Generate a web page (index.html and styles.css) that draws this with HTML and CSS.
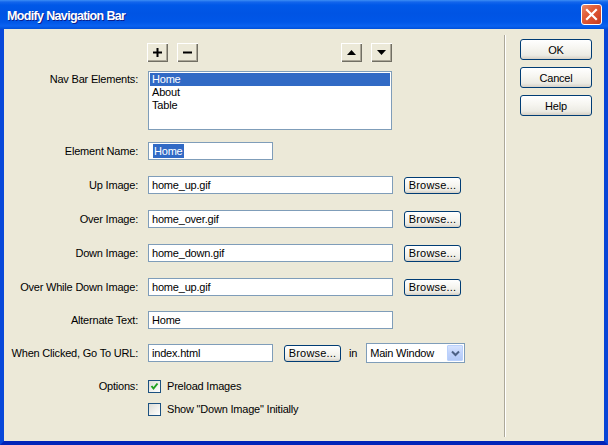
FILE: index.html
```html
<!DOCTYPE html>
<html>
<head>
<meta charset="utf-8">
<title>Modify Navigation Bar</title>
<link rel="stylesheet" href="styles.css">
</head>
<body>
<div class="window">
  <div class="titlebar">
    <span class="title">Modify Navigation Bar</span>
    <span class="close">
      <svg width="13" height="13" viewBox="0 0 13 13"><path d="M2 2 L11 11 M11 2 L2 11" stroke="#fff" stroke-width="2.2" stroke-linecap="square"/></svg>
    </span>
  </div>
  <div class="frame">
    <div class="client">
      <div class="form">
        <div class="row row-tools">
          <span class="label"></span>
          <div class="tools">
            <div class="tool-group">
              <span class="tbtn"><svg width="9" height="9" viewBox="0 0 9 9"><path d="M3.5 0h2v3.5h3.5v2h-3.5v3.5h-2v-3.5h-3.5v-2h3.5z" fill="#000"/></svg></span>
              <span class="tbtn"><svg width="9" height="9" viewBox="0 0 9 9"><rect x="0" y="3.5" width="9" height="2" fill="#000"/></svg></span>
            </div>
            <div class="tool-group">
              <span class="tbtn"><svg width="9" height="5" viewBox="0 0 9 5"><path d="M4.5 0 L9 5 L0 5 Z" fill="#000"/></svg></span>
              <span class="tbtn"><svg width="9" height="5" viewBox="0 0 9 5"><path d="M0 0 L9 0 L4.5 5 Z" fill="#000"/></svg></span>
            </div>
          </div>
        </div>

        <div class="row row-list">
          <span class="label label-top">Nav Bar Elements:</span>
          <div class="listbox">
            <div class="item selected">Home</div>
            <div class="item">About</div>
            <div class="item">Table</div>
          </div>
        </div>

        <div class="row row-first">
          <span class="label">Element Name:</span>
          <div class="field">
            <div class="textbox short"><span class="sel">Home</span></div>
          </div>
        </div>

        <div class="row row-field">
          <span class="label">Up Image:</span>
          <div class="field">
            <div class="textbox long">home_up.gif</div>
            <span class="xpbtn browse">Browse...</span>
          </div>
        </div>

        <div class="row row-field">
          <span class="label">Over Image:</span>
          <div class="field">
            <div class="textbox long">home_over.gif</div>
            <span class="xpbtn browse">Browse...</span>
          </div>
        </div>

        <div class="row row-field">
          <span class="label">Down Image:</span>
          <div class="field">
            <div class="textbox long">home_down.gif</div>
            <span class="xpbtn browse">Browse...</span>
          </div>
        </div>

        <div class="row row-field">
          <span class="label">Over While Down Image:</span>
          <div class="field">
            <div class="textbox long">home_up.gif</div>
            <span class="xpbtn browse">Browse...</span>
          </div>
        </div>

        <div class="row row-alt">
          <span class="label">Alternate Text:</span>
          <div class="field">
            <div class="textbox long">Home</div>
          </div>
        </div>

        <div class="row row-url">
          <span class="label">When Clicked, Go To URL:</span>
          <div class="field">
            <div class="textbox short">index.html</div>
            <span class="xpbtn browse">Browse...</span>
            <span class="in">in</span>
            <div class="select">
              <span class="select-text">Main Window</span>
              <span class="drop"><svg width="9" height="7" viewBox="0 0 9 7"><path d="M1 1.5 L4.5 5 L8 1.5" fill="none" stroke="#4D6185" stroke-width="2"/></svg></span>
            </div>
          </div>
        </div>

        <div class="row row-opt">
          <span class="label">Options:</span>
          <div class="field">
            <span class="checkbox"><svg width="11" height="11" viewBox="0 0 11 11"><path d="M2.5 5 L4.5 7.5 L8.5 2.5" fill="none" stroke="#21A121" stroke-width="2"/></svg></span>
            <span class="cblabel">Preload Images</span>
          </div>
        </div>

        <div class="row row-opt2">
          <span class="label"></span>
          <div class="field">
            <span class="checkbox"></span>
            <span class="cblabel">Show "Down Image" Initially</span>
          </div>
        </div>
      </div>

      <div class="divider"></div>

      <div class="actions">
        <span class="xpbtn action">OK</span>
        <span class="xpbtn action">Cancel</span>
        <span class="xpbtn action">Help</span>
      </div>
    </div>
  </div>
</div>
</body>
</html>
```

FILE: styles.css
```css
html, body {
  margin: 0;
  padding: 0;
  background: #ECE9D8;
}

body {
  font-family: "Liberation Sans", Arial, sans-serif;
  font-size: 11px;
  letter-spacing: -0.2px;
  color: #000;
}

.window {
  width: 608px;
  height: 445px;
  display: flex;
  flex-direction: column;
  overflow: hidden;
}

/* ---------- title bar ---------- */
.titlebar {
  height: 29px;
  flex: none;
  display: flex;
  align-items: center;
  justify-content: space-between;
  padding: 0 6px 0 7px;
  box-sizing: border-box;
  background: linear-gradient(to bottom,
    #3D8EF5 0px, #1466EC 2px, #0058E8 5px, #0054E4 14px,
    #0057E8 22px, #0A62F0 26px, #0050DA 29px);
}

.title {
  font-family: "Liberation Sans", Arial, sans-serif;
  font-weight: bold;
  font-size: 12.5px;
  letter-spacing: -0.65px;
  color: #fff;
  text-shadow: 1px 1px 0 #0A1E8C;
  padding-top: 2px;
}

.close {
  width: 21px;
  height: 21px;
  box-sizing: border-box;
  border: 1px solid #fff;
  border-radius: 3px;
  background: linear-gradient(135deg, #E98A6B 0%, #E2603A 35%, #D4482A 75%, #C33A1E 100%);
  display: flex;
  align-items: center;
  justify-content: center;
}

/* ---------- frame ---------- */
.frame {
  flex: 1;
  display: flex;
  border-left: 4px solid #0848DA;
  border-right: 4px solid #0845D6;
  border-bottom: 4px solid #0224B8;
}

.client {
  flex: 1;
  display: flex;
  background: #ECE9D8;
}

.form {
  width: 500px;
  flex: none;
  padding-top: 14px;
  box-sizing: border-box;
  display: flex;
  flex-direction: column;
}

.divider {
  width: 0;
  border-left: 1px solid #ACA899;
  border-right: 1px solid #FFFFFF;
  margin: 6px 0 4px 0;
}

.actions {
  padding: 10px 0 0 14px;
  display: flex;
  flex-direction: column;
  gap: 7px;
}

/* ---------- rows ---------- */
.row {
  display: grid;
  grid-template-columns: 134px auto;
  column-gap: 10px;
  align-items: center;
}

.label {
  text-align: right;
  line-height: 13px;
  white-space: nowrap;
}

.label-top {
  align-self: start;
  padding-top: 2px;
}

.row-tools { height: 19px; }
.row-list { margin-top: 9px; }
.row-first { margin-top: 12px; }
.row-field { margin-top: 16px; }
.row-alt { margin-top: 15px; }
.row-url { margin-top: 14px; }
.row-opt { margin-top: 16px; }
.row-opt2 { margin-top: 9px; }

.field {
  display: flex;
  align-items: center;
}

/* ---------- toolbar buttons ---------- */
.tools {
  width: 244px;
  display: flex;
  justify-content: space-between;
}

.tool-group {
  display: flex;
  gap: 9px;
  margin-left: -1px;
}

.tbtn {
  width: 21px;
  height: 19px;
  box-sizing: border-box;
  background: #ECE9D8;
  box-shadow: inset 1px 1px 0 #FFFFFF, inset -1px -1px 0 #716F64, inset -2px -2px 0 #ACA899;
  display: flex;
  align-items: center;
  justify-content: center;
  padding: 0 1px 1px 0;
}

/* ---------- listbox ---------- */
.listbox {
  width: 244px;
  height: 59px;
  box-sizing: border-box;
  border: 1px solid #7F9DB9;
  padding: 1px;
  background: #fff;
}

.item {
  line-height: 13px;
  height: 13px;
  padding-left: 2px;
}

.item.selected {
  background: #316AC5;
  color: #fff;
}

/* ---------- text boxes ---------- */
.textbox {
  height: 18px;
  box-sizing: border-box;
  border: 1px solid #7F9DB9;
  background: #fff;
  padding: 0 3px;
  line-height: 16px;
  white-space: nowrap;
}

.textbox.short { width: 125px; }
.textbox.long { width: 245px; }

.sel {
  background: #316AC5;
  color: #fff;
  padding: 1px 1px;
  margin-left: 1px;
}

/* ---------- XP buttons ---------- */
.xpbtn {
  box-sizing: border-box;
  border: 1px solid #003C74;
  border-radius: 3px;
  background: linear-gradient(to bottom, #FFFFFF 0%, #F6F5F0 45%, #ECEBE4 80%, #D6D0C5 100%);
  display: flex;
  align-items: center;
  justify-content: center;
  white-space: nowrap;
}

.browse {
  width: 57px;
  height: 17px;
  margin-left: 11px;
  letter-spacing: 0.2px;
}

.action {
  width: 72px;
  height: 21px;
}

.in {
  margin: 0 9px 0 8px;
}

/* ---------- select ---------- */
.select {
  width: 99px;
  height: 20px;
  box-sizing: border-box;
  border: 1px solid #7F9DB9;
  background: #fff;
  display: flex;
  align-items: stretch;
  justify-content: space-between;
  padding: 1px;
}

.select-text {
  padding-left: 2px;
  line-height: 16px;
}

.drop {
  width: 16px;
  box-sizing: border-box;
  border: 1px solid #BAD1FC;
  border-radius: 1px;
  background: linear-gradient(to bottom, #D6E3FE 0%, #C1D3FB 50%, #B3C9F7 100%);
  display: flex;
  align-items: center;
  justify-content: center;
}

/* ---------- checkbox ---------- */
.checkbox {
  width: 13px;
  height: 13px;
  box-sizing: border-box;
  border: 1px solid #1C5180;
  background: linear-gradient(135deg, #DCDCD7 0%, #F2F2EF 60%, #FFFFFF 100%);
  display: flex;
  align-items: center;
  justify-content: center;
}

.cblabel {
  margin-left: 6px;
  line-height: 13px;
}

.row-opt, .row-opt2 { height: 14px; }
```
